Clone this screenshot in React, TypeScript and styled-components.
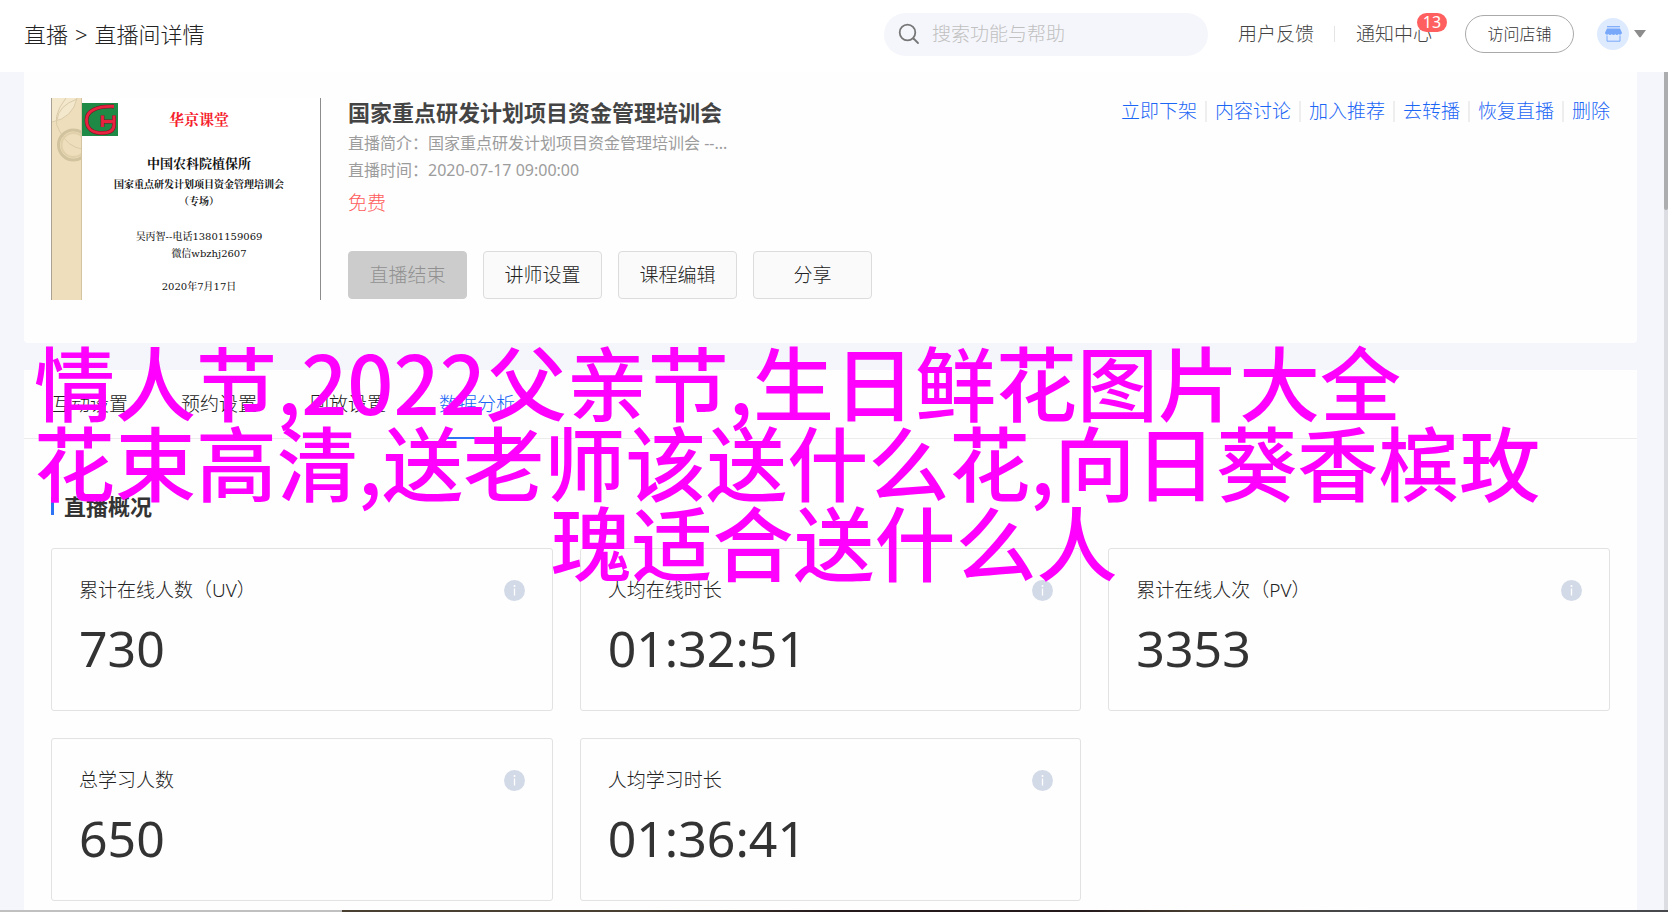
import React from 'react';
import styled, { createGlobalStyle } from 'styled-components';

const GlobalStyle = createGlobalStyle`
  *, *::before, *::after { box-sizing: border-box; }
  body {
    margin: 0;
    background: #f5f6fb;
    color: #222;
    font-family: "Noto Sans", "Noto Sans CJK SC", sans-serif;
    font-weight: 300;
    font-size: 19px;
    line-height: 28px;
  }
  button, input { font: inherit; color: inherit; }
  h1, h2, p, dl, dd, dt { margin: 0; }
  a { color: inherit; text-decoration: none; }
`;

const Page = styled.div`
  position: relative;
  height: 100vh;
  display: flex;
  flex-direction: column;
  overflow: hidden;
`;

const Header = styled.header`
  flex: none;
  height: 72px;
  padding: 0 22px 4px 24px;
  background: #fff;
  display: flex;
  align-items: center;
`;

const Breadcrumb = styled.nav`
  flex: 1;
  display: flex;
  gap: 7px;
  font-size: 22px;
`;

const SearchBox = styled.label`
  width: 324px;
  height: 43px;
  padding: 0 14px;
  border-radius: 22px;
  background: #f5f6fb;
  display: flex;
  align-items: center;
  gap: 12px;
`;

const SearchInput = styled.input`
  flex: 1;
  min-width: 0;
  padding: 0;
  border: 0;
  outline: 0;
  background: none;
  &::placeholder { color: #c0c0c0; opacity: 1; }
`;

const HeaderLinks = styled.div`
  display: flex;
  align-items: center;
  margin-left: 30px;
  color: #444;
`;

const HeaderLink = styled.a`
  position: relative;
  & + & {
    margin-left: 20px;
    padding-left: 22px;
  }
  & + &::before {
    content: "";
    position: absolute;
    left: 0;
    top: 6px;
    width: 1px;
    height: 16px;
    background: #e4e4e4;
  }
`;

const Badge = styled.span`
  position: absolute;
  right: -15px;
  top: -7px;
  width: 30px;
  border-radius: 10px;
  background: #ff5f5f;
  color: #fff;
  font-size: 16px;
  font-weight: 400;
  line-height: 19px;
  text-align: center;
`;

const ShopButton = styled.button`
  width: 109px;
  height: 38px;
  margin-left: 33px;
  padding: 0;
  border: 1px solid #aaa;
  border-radius: 19px;
  background: #fff;
  color: #333;
  font-size: 16px;
`;

const AccountButton = styled.button`
  display: flex;
  align-items: center;
  gap: 5px;
  margin-left: 23px;
  padding: 0;
  border: 0;
  background: none;
`;

const Body = styled.div`
  flex: 1;
  min-height: 0;
  display: flex;
`;

const Main = styled.main`
  flex: 1;
  min-width: 0;
  padding: 0 27px 0 24px;
  display: flex;
  flex-direction: column;
  gap: 27px;
`;

const ScrollTrack = styled.div`
  width: 4px;
  background: #dcdde3;
`;

const ScrollThumb = styled.div`
  height: 138px;
  border-radius: 0 0 4px 4px;
  background: #acadaf;
`;

const RoomCard = styled.section`
  flex: none;
  height: 271px;
  padding: 26px 27px;
  border-radius: 0 0 4px 4px;
  background: #fefefe;
  display: flex;
  align-items: flex-start;
`;

const Poster = styled.figure`
  width: 270px;
  height: 202px;
  margin: 0 27px 0 0;
  border-left: 1px solid #a9a294;
  border-right: 1px solid #8c8c8c;
  background: #fff;
  display: flex;
`;

const PosterText = styled.figcaption`
  position: relative;
  flex: 1;
  padding: 12px 4px 0 0;
  color: #111;
  font-family: "DejaVu Serif", "Noto Serif CJK SC", "Noto Sans CJK SC", serif;
  text-align: center;
`;

const PosterLogo = styled.svg`
  position: absolute;
  left: 0;
  top: 5px;
`;

const PosterLine = styled.p<{ $size?: number; $gap?: number; $red?: boolean; $bold?: boolean; $indent?: number }>`
  margin-top: ${p => p.$gap ?? 0}px;
  padding-left: ${p => p.$indent ?? 0}px;
  font-size: ${p => p.$size ?? 10}px;
  font-weight: ${p => (p.$bold ? 700 : 500)};
  line-height: ${p => (p.$size ? 20 : 17)}px;
  white-space: nowrap;
  ${p => p.$red && 'color: #f5222d;'}
`;

const RoomInfo = styled.div`
  flex: 1;
  min-width: 0;
`;

const RoomTitle = styled.h1`
  margin-bottom: 4px;
  color: #444;
  font-size: 22px;
  font-weight: 700;
  line-height: 28px;
`;

const Meta = styled.p`
  color: #9c9c9c;
  font-size: 16px;
  font-weight: 400;
  line-height: 27px;
`;

const Price = styled.p`
  margin-top: 5px;
  color: #ff5c5c;
`;

const ButtonRow = styled.div`
  display: flex;
  gap: 16px;
  margin-top: 34px;
`;

const ActionButton = styled.button`
  width: 119px;
  height: 48px;
  padding: 0;
  border: 1px solid #dcdcdc;
  border-radius: 4px;
  background: #fafafa;
  &:disabled {
    border-color: #ccc;
    background: #ccc;
    color: #909090;
  }
`;

const RoomLinks = styled.nav`
  display: flex;
  color: #1b66f5;
  line-height: 26px;
`;

const RoomLink = styled.a`
  display: flex;
  align-items: center;
  & + &::before {
    content: "";
    width: 2px;
    height: 21px;
    margin: 0 8px;
    background: #eee;
  }
`;

const DataCard = styled.section`
  flex: 1;
  background: #fefefe;
`;

const Tabs = styled.nav`
  display: flex;
  gap: 53px;
  height: 69px;
  padding: 0 28px;
  border-bottom: 1px solid #ececec;
`;

const Tab = styled.a<{ $active?: boolean }>`
  position: relative;
  line-height: 68px;
  color: ${p => (p.$active ? '#1b66f5' : '#222')};
  &::after {
    content: "";
    display: ${p => (p.$active ? 'block' : 'none')};
    position: absolute;
    left: 7px;
    right: 0;
    bottom: -1px;
    height: 2px;
    background: #2d74f5;
  }
`;

const SectionTitle = styled.h2`
  display: flex;
  align-items: center;
  gap: 10px;
  margin: 52px 27px 27px;
  color: #333;
  font-size: 22px;
  font-weight: 700;
  line-height: 30px;
  &::before {
    content: "";
    width: 3px;
    height: 18px;
    background: #2d74f5;
  }
`;

const StatGrid = styled.dl`
  display: grid;
  grid-template-columns: repeat(3, 1fr);
  gap: 27px;
  padding: 0 27px;
`;

const StatCard = styled.div`
  height: 163px;
  padding: 27px;
  border: 1px solid #e2e2e2;
  border-radius: 3px;
`;

const StatLabel = styled.dt`
  display: flex;
  justify-content: space-between;
  align-items: center;
`;

const StatValue = styled.dd`
  color: #333;
  font-size: 50px;
  font-weight: 400;
  line-height: 88px;
`;

const Headline = styled.div`
  position: absolute;
  left: 34px;
  right: 34px;
  top: 340px;
  display: flex;
  flex-direction: column;
  color: #ff00ff;
  font-family: "Noto Sans CJK SC", sans-serif;
  font-size: 81px;
  font-weight: 500;
  line-height: 80px;
  white-space: nowrap;
  pointer-events: none;
`;

const HeadlineRow = styled.span<{ $center?: boolean }>`
  align-self: ${p => (p.$center ? 'center' : 'flex-start')};
`;

const ProgressBar = styled.div`
  position: absolute;
  left: 0;
  right: 0;
  bottom: 0;
  height: 2px;
  display: flex;
  background: linear-gradient(90deg, #4a4032 38%, #241a1c 50%, #241a1c 65%, #4a4032 72%, #46484c 82%);
`;

const ProgressDone = styled.div`
  background: #c0c0c0;
`;

const SearchIcon = () => (
  <svg width="22" height="22" viewBox="0 0 22 22" fill="none" stroke="#777" strokeWidth="1.800" strokeLinecap="round" aria-hidden="true">
    <circle cx="9.5" cy="9.5" r="7.8" />
    <path d="M15.500 15.500l4.500 4.500" />
  </svg>
);

const ShopIcon = () => (
  <svg width="32" height="32" viewBox="0 0 32 32" aria-hidden="true">
    <circle cx="16" cy="16" r="16" fill="#deebff" />
    <path d="M10 8.700h13" stroke="#78a8fa" strokeWidth="1.200" />
    <path d="M10 10.500h13l2 4.200a2 2 0 0 1-3.400 1.400 2 2 0 0 1-3.400 0 2 2 0 0 1-3.400 0 2 2 0 0 1-3.400 0A2 2 0 0 1 8 14.700z" fill="#78a8fa" />
    <path d="M10 17.500v5.700h13v-5.700" fill="none" stroke="#78a8fa" strokeWidth="1" />
  </svg>
);

const CaretIcon = () => (
  <svg width="12" height="8" viewBox="0 0 12 8" aria-hidden="true">
    <path d="M0 0h12L6.800 7q-.8.8-1.600 0z" fill="#8c8c8c" />
  </svg>
);

const InfoIcon = () => (
  <svg width="21" height="21" viewBox="0 0 21 21" aria-hidden="true">
    <circle cx="10.500" cy="10.500" r="10.500" fill="#d3dae7" />
    <circle cx="10.500" cy="6" r="1" fill="#fff" />
    <path d="M10.500 8.500v7" stroke="#fff" strokeWidth="1.300" />
  </svg>
);

const PosterStrip = () => (
  <svg width="30" height="202" viewBox="0 0 30 202" fill="none" aria-hidden="true">
    <rect width="30" height="202" fill="#efdebb" />
    <path d="M0 0H25Q21 20 0 24Z" fill="#f3e7cc" />
    <path d="M25 0Q21 20 0 24M14 0Q-2 20 8 34 16 49 30 51M5 22Q6 8 25 1" stroke="#d9cba9" strokeWidth="1" />
    <circle cx="21.500" cy="47" r="15" stroke="#d2c39f" strokeWidth="3" />
    <circle cx="21.500" cy="47" r="12" stroke="#e0d0aa" strokeWidth="2" />
    <path d="M29.500 0V202" stroke="#d4c49f" />
  </svg>
);

const stats = [
  { label: '累计在线人数（UV）', value: '730' },
  { label: '人均在线时长', value: '01:32:51' },
  { label: '累计在线人次（PV）', value: '3353' },
  { label: '总学习人数', value: '650' },
  { label: '人均学习时长', value: '01:36:41' },
];

const tabs = ['互动设置', '预约设置', '回放设置', '数据分析'];
const roomLinks = ['立即下架', '内容讨论', '加入推荐', '去转播', '恢复直播', '删除'];
const actions = ['直播结束', '讲师设置', '课程编辑', '分享'];
const played = 20.5;

export default function App() {
  return (
    <Page>
      <GlobalStyle />
      <Header>
        <Breadcrumb aria-label="位置">
          <a href="#live">直播</a>
          <span>&gt;</span>
          <span>直播间详情</span>
        </Breadcrumb>
        <SearchBox>
          <SearchIcon />
          <SearchInput type="text" placeholder="搜索功能与帮助" aria-label="搜索功能与帮助" />
        </SearchBox>
        <HeaderLinks>
          <HeaderLink href="#feedback">用户反馈</HeaderLink>
          <HeaderLink href="#notice">
            通知中心<Badge>13</Badge>
          </HeaderLink>
        </HeaderLinks>
        <ShopButton type="button">访问店铺</ShopButton>
        <AccountButton type="button" aria-label="账户">
          <ShopIcon />
          <CaretIcon />
        </AccountButton>
      </Header>
      <Body>
        <Main>
          <RoomCard>
            <Poster>
              <PosterStrip />
              <PosterText>
                <PosterLogo width="36" height="33" viewBox="0 0 36 33" fill="none" aria-hidden="true">
                  <rect width="36" height="33" fill="#1f8a45" />
                  <path d="M32 3.500C14 3 4.500 8 4.500 17S11 30 20 30 32 27 32 22V12.500M20.500 12.500V24M20.500 18.500H31" stroke="#7d1026" strokeWidth="3.800" />
                  <path d="M32 3.500C14 3 4.500 8 4.500 17S11 30 20 30 32 27 32 22V12.500M20.500 12.500V24M20.500 18.500H31" stroke="#e8233f" strokeWidth="2.800" />
                </PosterLogo>
                <PosterLine $size={15} $red $bold>华京课堂</PosterLine>
                <PosterLine $size={13} $gap={24} $bold>中国农科院植保所</PosterLine>
                <PosterLine $gap={2} $bold>国家重点研发计划项目资金管理培训会</PosterLine>
                <PosterLine $bold>（专场）</PosterLine>
                <PosterLine $gap={18}>吴丙智--电话13801159069</PosterLine>
                <PosterLine $indent={20}>微信wbzhj2607</PosterLine>
                <PosterLine $gap={16}>2020年7月17日</PosterLine>
              </PosterText>
            </Poster>
            <RoomInfo>
              <RoomTitle>国家重点研发计划项目资金管理培训会</RoomTitle>
              <Meta>直播简介：国家重点研发计划项目资金管理培训会 --...</Meta>
              <Meta>直播时间：2020-07-17 09:00:00</Meta>
              <Price>免费</Price>
              <ButtonRow>
                {actions.map((name, i) => (
                  <ActionButton key={name} type="button" disabled={i === 0}>{name}</ActionButton>
                ))}
              </ButtonRow>
            </RoomInfo>
            <RoomLinks aria-label="直播操作">
              {roomLinks.map(name => (
                <RoomLink key={name} href="#action">{name}</RoomLink>
              ))}
            </RoomLinks>
          </RoomCard>
          <DataCard>
            <Tabs aria-label="设置">
              {tabs.map((name, i) => (
                <Tab key={name} href="#tab" $active={i === 3}>{name}</Tab>
              ))}
            </Tabs>
            <SectionTitle>直播概况</SectionTitle>
            <StatGrid>
              {stats.map(s => (
                <StatCard key={s.label}>
                  <StatLabel>{s.label}<InfoIcon /></StatLabel>
                  <StatValue>{s.value}</StatValue>
                </StatCard>
              ))}
            </StatGrid>
          </DataCard>
        </Main>
        <ScrollTrack><ScrollThumb /></ScrollTrack>
      </Body>
      <Headline>
        <HeadlineRow>情人节,2022父亲节,生日鲜花图片大全</HeadlineRow>
        <HeadlineRow>花束高清,送老师该送什么花,向日葵香槟玫</HeadlineRow>
        <HeadlineRow $center>瑰适合送什么人</HeadlineRow>
      </Headline>
      <ProgressBar><ProgressDone style={{ width: `${played}%` }} /></ProgressBar>
    </Page>
  );
}
